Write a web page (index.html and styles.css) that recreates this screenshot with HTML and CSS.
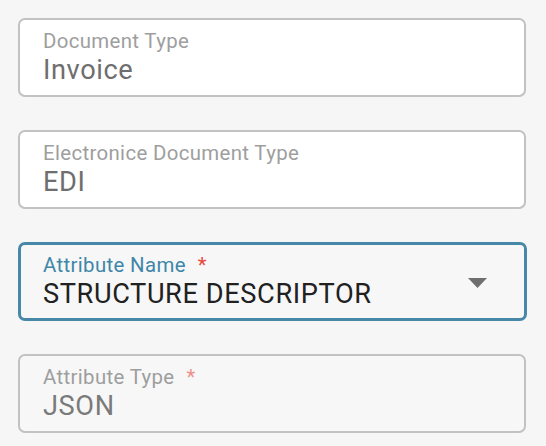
FILE: index.html
```html
<!DOCTYPE html>
<html>
<head>
<meta charset="utf-8">
<link rel="stylesheet" href="styles.css">
</head>
<body>
<div class="form">
  <div class="field readonly">
    <div class="label">Document Type</div>
    <div class="value">Invoice</div>
  </div>
  <div class="field readonly">
    <div class="label">Electronice Document Type</div>
    <div class="value">EDI</div>
  </div>
  <div class="field focused">
    <div class="content">
      <div class="label">Attribute Name<span class="req">*</span></div>
      <div class="value">STRUCTURE DESCRIPTOR</div>
    </div>
    <svg class="arrow" width="20" height="10" viewBox="0 0 20 10"><path d="M0 0 L19 0 L9.5 10 Z" fill="#6f6f6f"/></svg>
  </div>
  <div class="field disabled">
    <div class="label">Attribute Type<span class="req">*</span></div>
    <div class="value">JSON</div>
  </div>
</div>
</body>
</html>
```

FILE: styles.css
```css
html, body {
  margin: 0;
  padding: 0;
  background: #f6f6f6;
  font-family: Roboto, "Noto Sans", Arial, sans-serif;
}
.form {
  padding: 18px 20px 0 18px;
  display: flex;
  flex-direction: column;
  gap: 33px;
}
.field {
  box-sizing: border-box;
  height: 79px;
  width: 508px;
  border: 2px solid #c2c2c2;
  border-radius: 7px;
  padding: 9px 23px 0 23px;
  background: #f7f7f7;
}
.field.readonly {
  background: #ffffff;
}
.label {
  font-size: 20.4px;
  line-height: 24px;
  letter-spacing: 0.35px;
  color: #9e9e9e;
  white-space: nowrap;
}
.value {
  margin-top: 1px;
  font-size: 27.2px;
  line-height: 32px;
  letter-spacing: 0.6px;
  color: #6e6e6e;
  white-space: nowrap;
}
.req {
  margin-left: 12px;
  color: #e8493d;
}
.field.focused {
  width: 509px;
  border: 3px solid #4787a8;
  padding: 8px 36px 0 22px;
  display: flex;
  align-items: center;
  justify-content: space-between;
}
.field.focused .content {
  align-self: flex-start;
}
.field.focused .label {
  color: #3f86a9;
}
.field.focused .value {
  color: #212121;
}
.arrow {
  margin-top: -5px;
}
.field.disabled .value {
  color: #7a7a7a;
}
.field.disabled .req {
  color: #ef9189;
}
```
